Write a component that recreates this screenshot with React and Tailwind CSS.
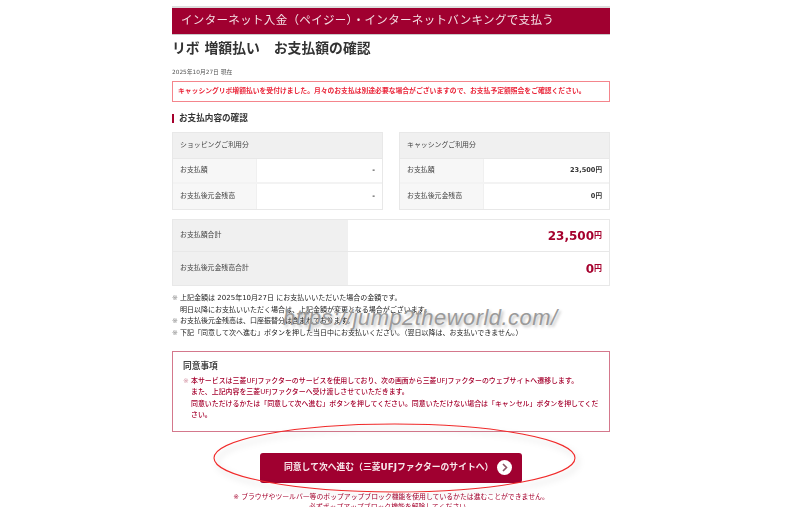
const FONT = '"DejaVu Sans","Noto Sans CJK JP",sans-serif';

function SmallTable({ head, rows }) {
  return (
    <div className="w-[211px] border border-[#e8e8e8] text-[6.9px] text-[#444]">
      <div className="h-[26px] flex items-center pl-[7px] bg-[#f0f0f0] border-b border-[#e8e8e8]">{head}</div>
      {rows.map(([label, value], i) => (
        <div key={label} className={`h-[25px] flex ${i === 0 ? "border-b-2 border-[#f3f3f3]" : ""}`}>
          <div className="w-[84px] flex items-center pl-[7px] bg-[#f7f7f7] border-r border-[#f0f0f0]">{label}</div>
          <div className="flex-1 flex items-center justify-end pr-[7px] font-bold text-[#333] text-[6.6px]">{value}</div>
        </div>
      ))}
    </div>
  );
}

function TotalRow({ label, value, last }) {
  return (
    <div className={`flex ${last ? "h-[33px]" : "h-[32px] border-b border-[#e8e8e8]"}`}>
      <div className="w-[175px] flex items-center pl-[7px] bg-[#f0f0f0] text-[6.9px] text-[#444]">{label}</div>
      <div className="flex-1 flex items-center justify-end pr-[7px] font-bold text-[#a5002d]">
        <span className="text-[12px]">{value}</span>
        <span className="text-[8px]">円</span>
      </div>
    </div>
  );
}

export default function App() {
  return (
    <div className="relative w-[800px] h-[507px] overflow-hidden bg-white" style={{ fontFamily: FONT }}>
      <div className="w-[438px] ml-[172px] pt-[6px] blur-[0.3px]">
        <div className="h-[29px] border-t-2 border-[#dddddd] border-b border-b-[#c9c9c9] bg-[#a00030] flex items-center pl-[9px] text-[11.5px] text-[#f3dfe4] tracking-[0.33px]">
          インターネット入金（ペイジー）・インターネットバンキングで支払う
        </div>
        <h1 className="mt-[4px] h-[18px] leading-[18px] text-[13.85px] font-bold text-[#333]">リボ 増額払い　お支払額の確認</h1>
        <div className="mt-[11px] h-[9px] leading-[9px] text-[5.8px] text-[#555]">2025年10月27日 現在</div>
        <div className="mt-[4px] h-[21px] border border-[#f4858c] flex items-center pl-[5px] text-[6.8px] font-bold text-[#ea2438]">
          キャッシングリボ増額払いを受付けました。月々のお支払は別途必要な場合がございますので、お支払予定額照会をご確認ください。
        </div>
        <div className="mt-[12px] h-[9px] flex items-center gap-[5px] text-[8.6px] font-bold text-[#333]">
          <span className="w-[2px] h-[9px] bg-[#a5002d]"></span>
          お支払内容の確認
        </div>
        <div className="mt-[9px] flex justify-between">
          <SmallTable head="ショッピングご利用分" rows={[["お支払額", "-"], ["お支払後元金残高", "-"]]} />
          <SmallTable head="キャッシングご利用分" rows={[["お支払額", "23,500円"], ["お支払後元金残高", "0円"]]} />
        </div>
        <div className="mt-[9px] border border-[#e8e8e8]">
          <TotalRow label="お支払額合計" value="23,500" />
          <TotalRow label="お支払後元金残高合計" value="0" last />
        </div>
        <div className="mt-[7px] text-[7px] text-[#222] leading-[11.7px]">
          <p className="pl-[8px] -indent-[8px]"><span className="text-[#888]">※</span> 上記金額は 2025年10月27日 にお支払いいただいた場合の金額です。<br />明日以降にお支払いいただく場合は、上記金額が変更となる場合がございます。</p>
          <p className="pl-[8px] -indent-[8px]"><span className="text-[#888]">※</span> お支払後元金残高は、口座振替分は含まれております。</p>
          <p className="pl-[8px] -indent-[8px]"><span className="text-[#888]">※</span> 下記「同意して次へ進む」ボタンを押した当日中にお支払いください。（翌日以降は、お支払いできません。）</p>
        </div>
        <div className="mt-[11px] h-[81px] border border-[#d4788c] pl-[10px] pr-[8px]">
          <div className="mt-[9px] h-[10px] leading-[10px] text-[8.7px] font-bold text-[#444]">同意事項</div>
          <div className="mt-[5px] pl-[8px] text-[6.93px] text-[#a5002d] font-medium leading-[11px]">
            <p className="-indent-[8px]"><span className="text-[#d08a9c]">※</span> 本サービスは三菱UFJファクターのサービスを使用しており、次の画面から三菱UFJファクターのウェブサイトへ遷移します。</p>
            <p>また、上記内容を三菱UFJファクターへ受け渡しさせていただきます。</p>
            <p className="mt-[1px]">同意いただけるかたは「同意して次へ進む」ボタンを押してください。同意いただけない場合は「キャンセル」ボタンを押してください。</p>
          </div>
        </div>
        <div className="mt-[21px] flex justify-center">
          <div className="w-[262px] h-[30px] rounded-[3px] bg-[#a00030] flex items-center pl-[24px] gap-[4px] text-[8.8px] font-bold text-[#f8e8ec]">
            <span>同意して次へ進む（三菱UFJファクターのサイトへ）</span>
            <svg width="15" height="15" viewBox="0 0 15 15"><circle cx="7.5" cy="7.5" r="7.5" fill="#fff" /><path d="M6 4l3.5 3.5L6 11" fill="none" stroke="#8a5566" strokeWidth="1.6" /></svg>
          </div>
        </div>
        <div className="mt-[9px] text-center text-[6.85px] leading-[10px] text-[#a5002d]">
          <p>※ ブラウザやツールバー等のポップアップブロック機能を使用しているかたは進むことができません。</p>
          <p>必ずポップアップブロック機能を解除してください。</p>
        </div>
      </div>

      <svg className="absolute left-0 top-0 pointer-events-none" width="800" height="507">
        <defs>
          <filter id="s" x="-10%" y="-20%" width="120%" height="150%"><feDropShadow dx="3" dy="4" stdDeviation="3" floodColor="#000" floodOpacity="0.2" /></filter>
        </defs>
        <ellipse cx="394.5" cy="458" rx="180.5" ry="34" fill="none" stroke="#f02a2a" strokeWidth="1.1" filter="url(#s)" />
      </svg>
      <div
        className="absolute left-[283px] top-[305px] text-[22px] italic font-light text-[#9a9a9a] leading-[26px] whitespace-nowrap tracking-[0.45px] pointer-events-none"
        style={{ fontFamily: '"Liberation Sans",sans-serif', textShadow: "2px 2px 3px rgba(0,0,0,0.25)" }}
      >
        https://jump2theworld.com/
      </div>
    </div>
  );
}
